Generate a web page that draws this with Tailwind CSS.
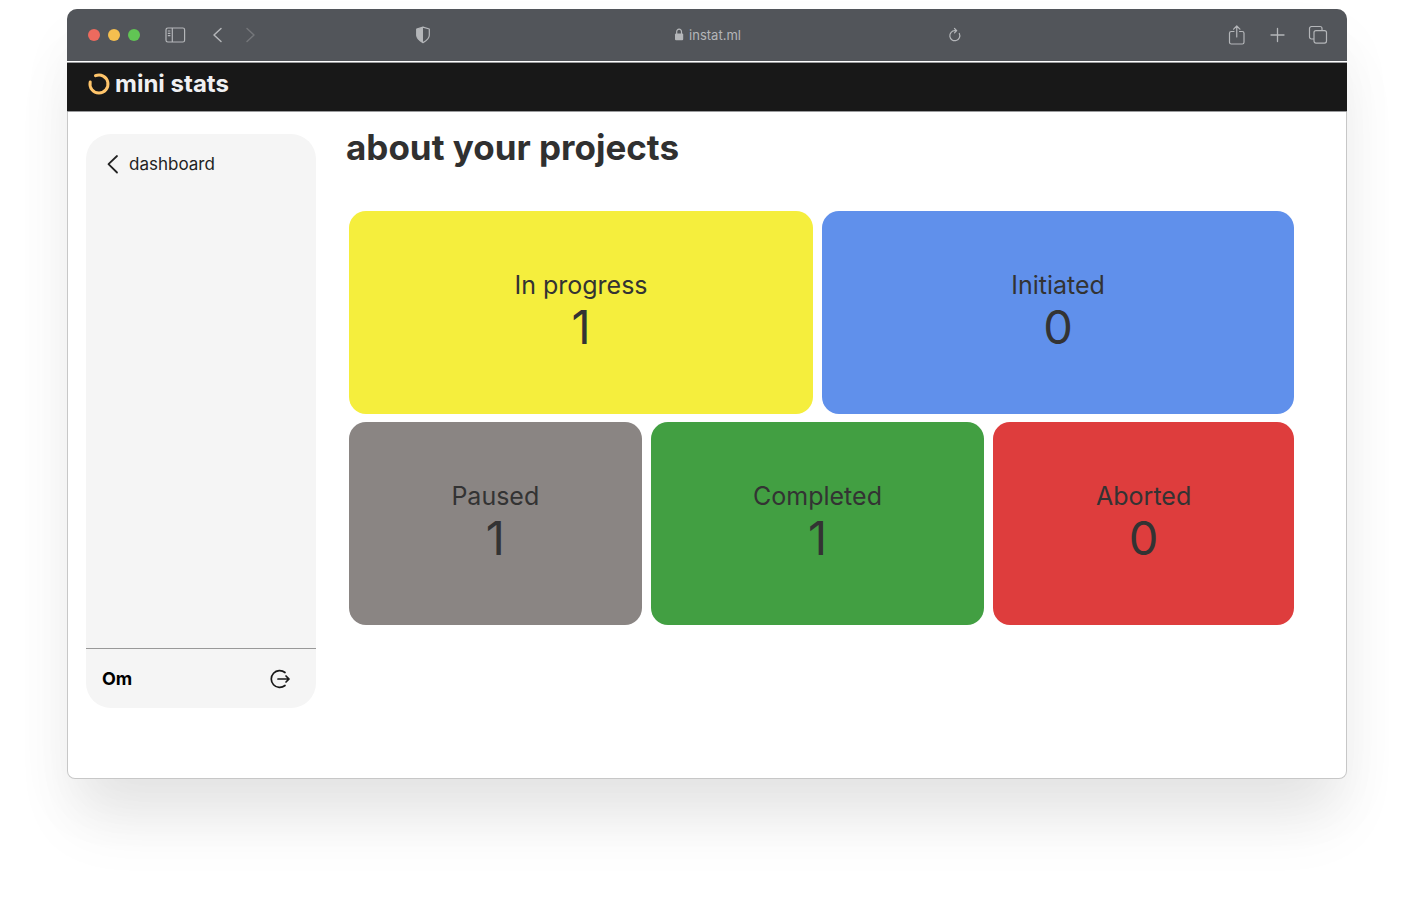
<!DOCTYPE html>
<html lang="en">
<head>
<meta charset="utf-8">
<meta name="viewport" content="width=device-width, initial-scale=1">
<title>mini stats</title>
<script src="https://cdn.jsdelivr.net/npm/@tailwindcss/browser@4"></script>
</head>
<body class="min-h-screen bg-white px-[67px] pt-[9px] pb-[125px] font-['Inter','Liberation_Sans',sans-serif] text-[#303030]">
<div class="flex min-h-[770px] flex-col overflow-hidden rounded-t-[10px] rounded-b-lg bg-white shadow-[0_0_0_1px_rgba(0,0,0,0.22)_inset,0_50px_60px_-10px_rgba(0,0,0,0.08),0_30px_60px_0_rgba(0,0,0,0.04)]">

  <!-- Browser toolbar -->
  <div class="flex h-[53px] items-center border-b border-white bg-[#52555a] pr-[19px] pb-px pl-5 text-[#b4b6b9]">
    <div class="flex flex-1 items-center pr-[22px]">
      <div class="flex gap-2">
        <button aria-label="Close" class="ml-px size-3 rounded-full bg-[#ed6a5e]"></button>
        <button aria-label="Minimize" class="size-3 rounded-full bg-[#f5bf4f]"></button>
        <button aria-label="Zoom" class="size-3 rounded-full bg-[#61c554]"></button>
      </div>
      <button aria-label="Sidebar" class="ml-[25px]">
        <svg class="block" width="21" height="16" viewBox="0 0 21 16" fill="none" stroke="currentColor" stroke-width="1.2"><rect x="1" y="1" width="18.6" height="14" rx="1.8"/><path d="M7.3 1v14M2.8 4h2.6M2.8 6.3h2.6M2.8 8.6h2.6"/></svg>
      </button>
      <button aria-label="Back" class="ml-6">
        <svg class="block" width="14" height="16" viewBox="0 0 14 16" fill="none" stroke="currentColor" stroke-width="1.5" stroke-linecap="round" stroke-linejoin="round"><path d="M11 1.500 4 8l7 6.500"/></svg>
      </button>
      <button aria-label="Forward" class="ml-5 text-[#74767a]">
        <svg class="block" width="14" height="16" viewBox="0 0 14 16" fill="none" stroke="currentColor" stroke-width="1.5" stroke-linecap="round" stroke-linejoin="round"><path d="M3 1.500 10 8l-7 6.500"/></svg>
      </button>
      <button aria-label="Privacy report" class="ml-auto">
        <svg class="block" width="16" height="18" viewBox="0 0 16 18"><path d="M8 1.200 14.300 3v6.300c0 3-2.400 5.200-6.300 7.300-3.900-2.100-6.300-4.300-6.300-7.300V3z" fill="none" stroke="currentColor" stroke-width="1.200" stroke-linejoin="round"/><path d="M8 1.200v15.400C4.100 14.500 1.700 12.300 1.700 9.300V3z" fill="currentColor"/></svg>
      </button>
    </div>
    <div class="flex w-[41%] items-center pl-[14px]">
      <div class="flex flex-1 items-center justify-center gap-[5px]">
        <svg width="10" height="13" viewBox="0 0 10 13"><rect x="1" y="5.500" width="8.200" height="6.800" rx="1.100" fill="currentColor"/><path d="M2.700 6V3.800a2.400 2.700 0 0 1 4.800 0V6" fill="none" stroke="currentColor" stroke-width="1.200"/></svg>
        <input aria-label="Address" type="text" value="instat.ml" class="field-sizing-content bg-transparent text-[13px] leading-5 outline-none">
      </div>
      <button aria-label="Reload">
        <svg class="block" width="14" height="16" viewBox="0 0 14 16" fill="none" stroke="currentColor" stroke-width="1.200" stroke-linecap="round" stroke-linejoin="round"><path d="M11.300 6.500a5 5 0 1 1-4.300-2.800h1.200M6.500 1.500l2.200 2.200-2.200 2.200"/></svg>
      </button>
    </div>
    <div class="flex flex-1 items-center justify-end gap-[21px] pl-[22px]">
      <button aria-label="Share">
        <svg class="block" width="18" height="22" viewBox="0 0 18 22" fill="none" stroke="currentColor" stroke-width="1.200" stroke-linecap="round" stroke-linejoin="round"><path d="M6 7.500H3.300A1.800 1.800 0 0 0 1.500 9.300v8.900A1.800 1.800 0 0 0 3.300 20h10.900a1.800 1.800 0 0 0 1.800-1.800V9.300a1.800 1.800 0 0 0-1.800-1.800H11.500M8.750 13V2.200M5.600 5.200l3.150-3.200 3.150 3.200"/></svg>
      </button>
      <button aria-label="New tab" class="ml-[2px]">
        <svg class="block" width="18" height="18" viewBox="0 0 18 18" fill="none" stroke="currentColor" stroke-width="1.300" stroke-linecap="round"><path d="M8.500 2.500v13M2 9h13"/></svg>
      </button>
      <button aria-label="Tab overview">
        <svg class="block" width="20" height="20" viewBox="0 0 20 20" fill="none" stroke="currentColor" stroke-width="1.200" stroke-linejoin="round"><rect x="6" y="5.600" width="12.500" height="12.500" rx="2"/><path d="M6 14H3.500a2 2 0 0 1-2-2V3.500a2 2 0 0 1 2-2H12a2 2 0 0 1 2 2v2.100"/></svg>
      </button>
    </div>
  </div>

  <header class="flex h-[50px] items-center gap-1 border-t border-b border-[#9a9b9d] bg-[#181818] px-5 pb-[7px]">
    <svg width="24" height="24" viewBox="0 0 24 24" fill="none" stroke="#ffc56b" stroke-width="3" stroke-linecap="round"><path d="M8.500 3.700A9 9 0 1 1 3.200 10"/></svg>
    <span class="text-2xl leading-8 font-bold text-[#f0f0f2]">mini stats</span>
  </header>

  <div class="flex flex-1 pr-[53px] pl-[19px]">
    <aside class="mt-[22px] mb-[71px] flex w-[230px] shrink-0 flex-col rounded-[25px] bg-[#f5f5f5]">
      <nav class="px-5 pt-5">
        <a href="#" class="flex items-center gap-2 text-[17px] leading-5 text-[#222]">
          <svg width="15" height="20" viewBox="0 0 15 20" fill="none" stroke="currentColor" stroke-width="1.800" stroke-linecap="round" stroke-linejoin="round"><path d="M11 2 2.500 10.200 11 18.500"/></svg>
          dashboard
        </a>
      </nav>
      <div class="mt-auto flex h-[60px] items-center justify-between border-t border-[#999] pr-[25px] pl-4 text-black">
        <span class="text-lg font-bold">Om</span>
        <button aria-label="Log out">
          <svg class="block" width="22" height="22" viewBox="0 0 22 22" fill="none" stroke="#181818" stroke-width="1.700" stroke-linecap="round" stroke-linejoin="round"><path d="M16 4.500a8.400 8.400 0 1 0 0 13M9 11h11M17 8l3 3-3 3"/></svg>
        </button>
      </div>
    </aside>

    <main class="flex flex-1 flex-col pt-[14px] pl-[30px]">
      <h1 class="text-[35px] leading-[42px] font-bold">about your projects</h1>
      <div class="mt-[43px] ml-[3px] flex flex-col gap-2 text-center text-[#333]">
        <div class="grid grid-cols-[464fr_472fr] gap-[9px]">
          <section class="rounded-[17px] bg-[#f5ee3d] pt-[58px] pb-[62px]">
            <h2 class="text-[25px] leading-8">In progress</h2>
            <p class="text-[47px] leading-[51px]">1</p>
          </section>
          <section class="rounded-[17px] bg-[#6090eb] pt-[58px] pb-[62px]">
            <h2 class="text-[25px] leading-8">Initiated</h2>
            <p class="text-[47px] leading-[51px]">0</p>
          </section>
        </div>
        <div class="grid grid-cols-[293fr_334fr_301fr] gap-[9px]">
          <section class="rounded-[17px] bg-[#8a8583] pt-[58px] pb-[62px]">
            <h2 class="text-[25px] leading-8">Paused</h2>
            <p class="text-[47px] leading-[51px]">1</p>
          </section>
          <section class="rounded-[17px] bg-[#429f42] pt-[58px] pb-[62px]">
            <h2 class="text-[25px] leading-8">Completed</h2>
            <p class="text-[47px] leading-[51px]">1</p>
          </section>
          <section class="rounded-[17px] bg-[#de3d3d] pt-[58px] pb-[62px]">
            <h2 class="text-[25px] leading-8">Aborted</h2>
            <p class="text-[47px] leading-[51px]">0</p>
          </section>
        </div>
      </div>
    </main>
  </div>
</div>
</body>
</html>
